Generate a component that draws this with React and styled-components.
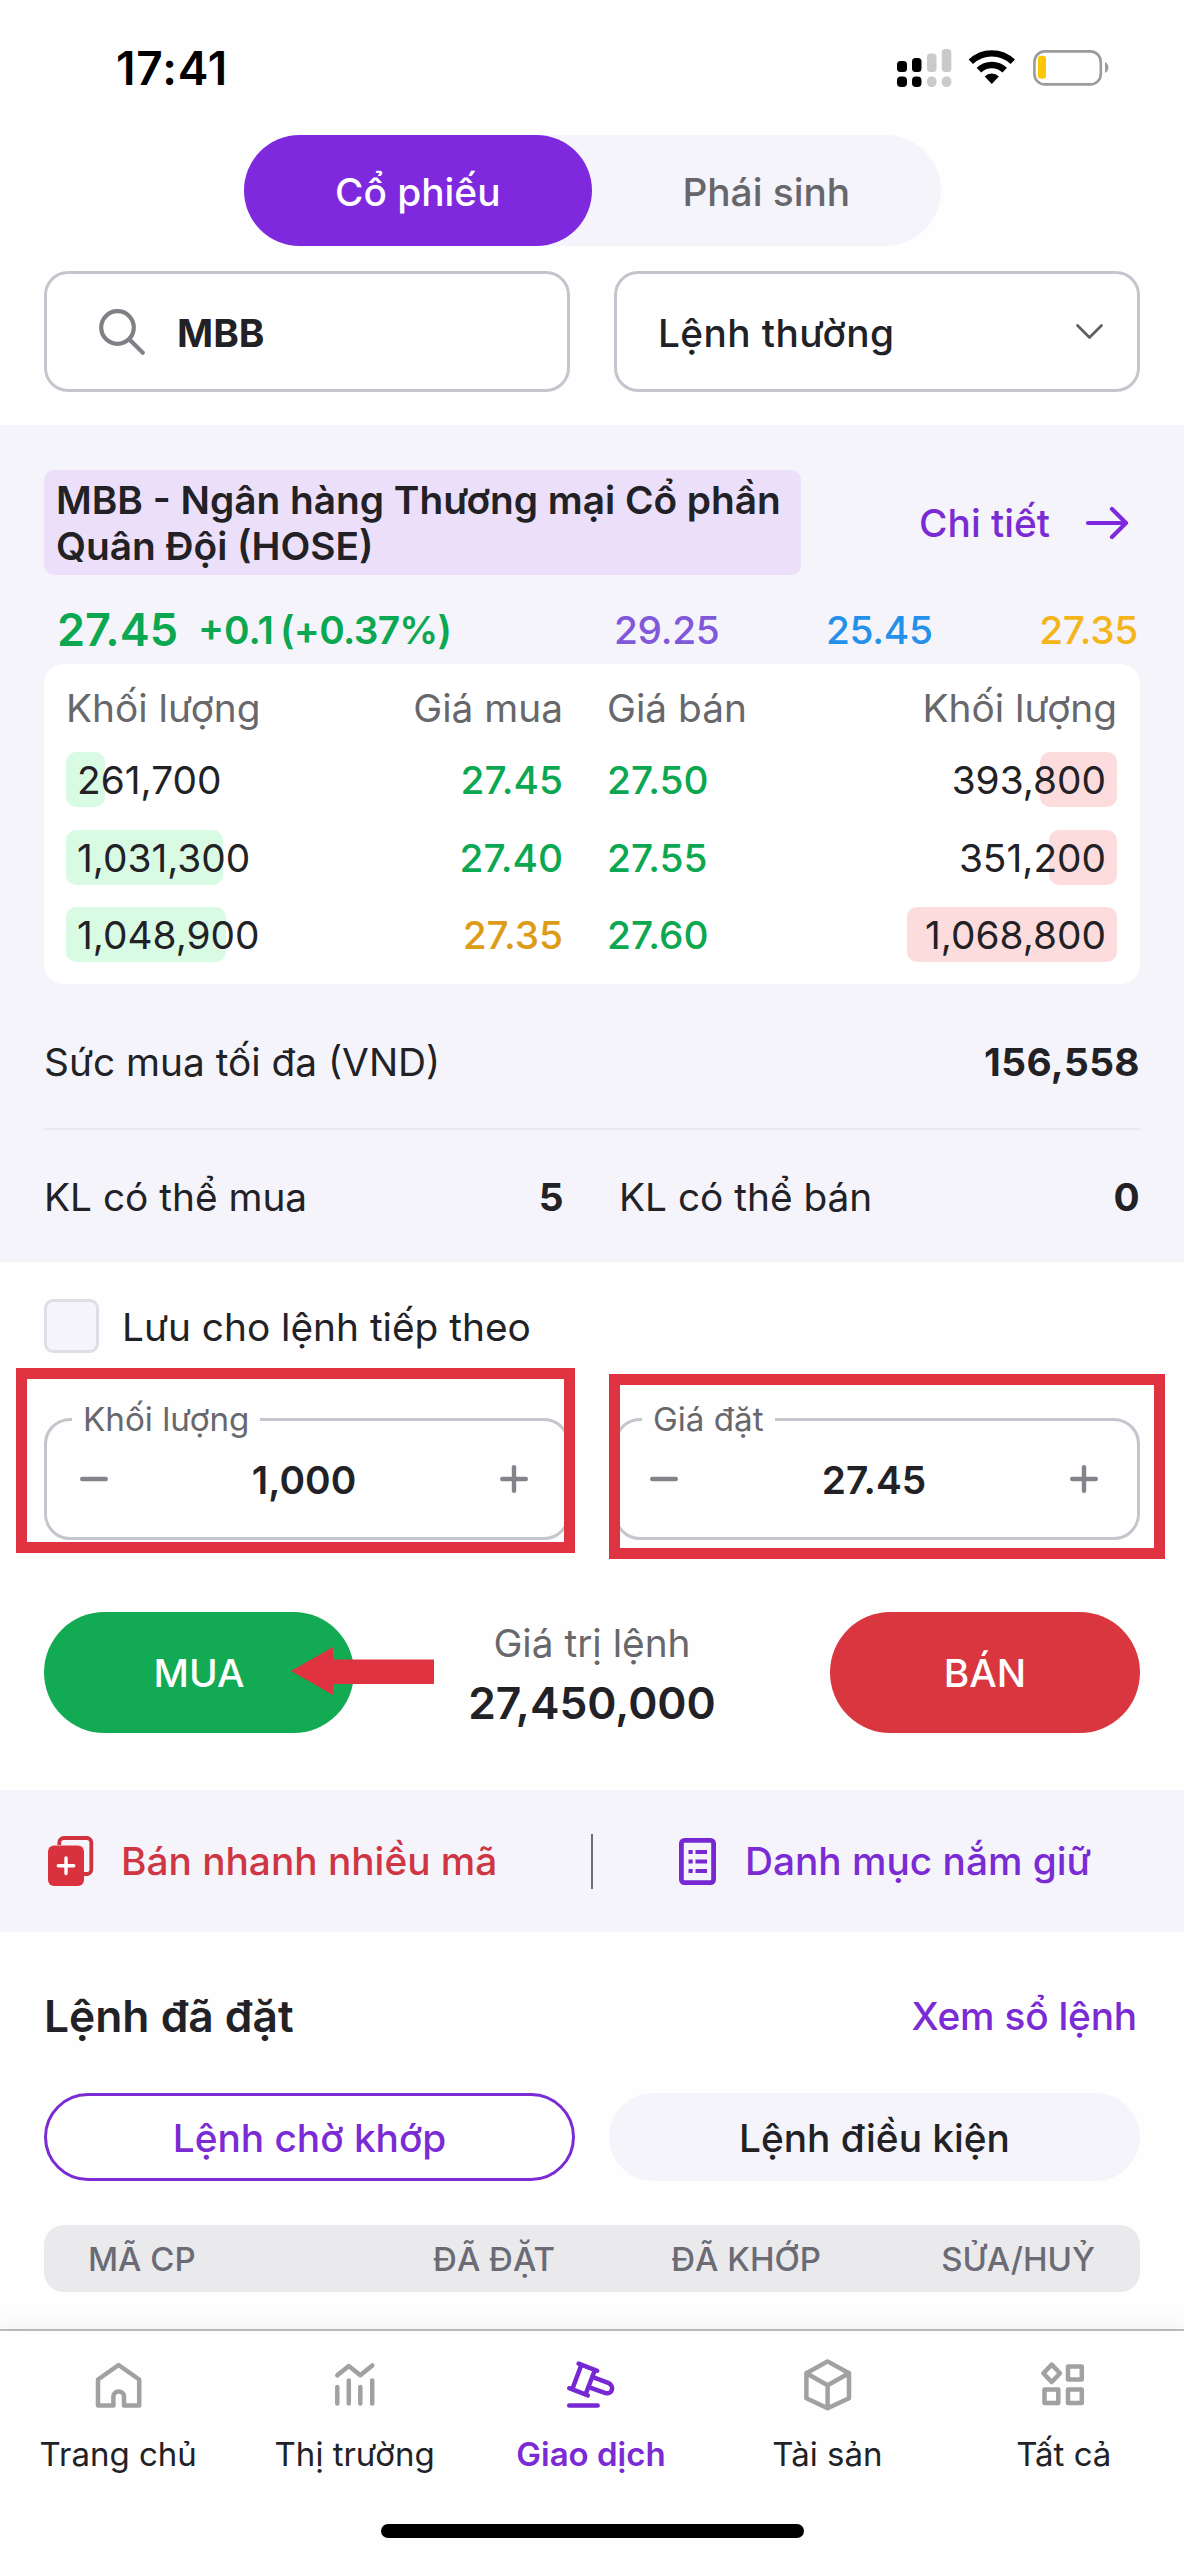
import React, { useState } from "react";
import styled, { createGlobalStyle } from "styled-components";

const GlobalStyle = createGlobalStyle`
  * {
    box-sizing: border-box;
  }
  body {
    margin: 0;
    background: #fefefe;
    font-family: Inter, "Noto Sans", sans-serif;
    font-size: 38.8px;
    color: #222226;
  }
  button {
    padding: 0;
    border: none;
    background: none;
    font: inherit;
    color: inherit;
  }
  svg {
    display: block;
    flex: none;
    overflow: visible;
  }
`;

const Screen = styled.div`
  width: 1184px;
  height: 2560px;
  overflow: hidden;
  display: flex;
  flex-direction: column;
  white-space: nowrap;
`;

/* ---------- status bar ---------- */

const StatusBar = styled.div`
  height: 135px;
  padding: 0 76px 0 116px;
  display: flex;
  justify-content: space-between;
  align-items: center;
`;

const Clock = styled.div`
  font-size: 46px;
  font-weight: 600;
  letter-spacing: 0.9px;
  color: #000;
`;

const StatusIcons = styled.div`
  display: flex;
  align-items: center;
  gap: 18px;
`;

/* ---------- header ---------- */

const Header = styled.div`
  height: 290px;
  padding: 0 44px;
`;

const Segment = styled.div`
  width: 697px;
  height: 111px;
  margin: 0 auto;
  display: flex;
  border-radius: 56px;
  background: #f5f4fb;
`;

const SegmentItem = styled.button`
  flex: 1;
  padding-top: 1px;
  border-radius: 56px;
  font-weight: 500;
  color: ${(props) => (props.$active ? "#fff" : "#66666b")};
  background: ${(props) => (props.$active ? "#7f29df" : "transparent")};
`;

const TwoColumns = styled.div`
  display: grid;
  grid-template-columns: 526px 526px;
  column-gap: 44px;
`;

const PickerRow = styled(TwoColumns)`
  margin-top: 25px;
`;

const PickerBox = styled.div`
  height: 121px;
  padding: 1px ${(props) => props.$right || 0}px 0 ${(props) => props.$left}px;
  display: flex;
  align-items: center;
  border: 3px solid #c5c5ce;
  border-radius: 24px;
  background: #fff;
`;

const Symbol = styled.div`
  margin-left: 32px;
  font-weight: 700;
`;

const OrderType = styled.div`
  flex: 1;
  font-weight: 500;
  letter-spacing: 0.4px;
`;

/* ---------- quote ---------- */

const QuoteSection = styled.section`
  height: 837px;
  padding: 45px 44px 0;
  background: #f5f4fb;
`;

const NameRow = styled.div`
  height: 105px;
  display: flex;
  justify-content: space-between;
  align-items: center;
`;

const CompanyName = styled.div`
  width: 757px;
  height: 105px;
  padding: 7px 12px 0;
  border-radius: 10px;
  background: #ecdffa;
  font-weight: 600;
  line-height: 46px;
  white-space: normal;
`;

const DetailLink = styled.a`
  padding-right: 12px;
  display: flex;
  align-items: center;
  gap: 36px;
  font-weight: 500;
  color: #7a2bd3;
`;

const PriceRow = styled.div`
  height: 60px;
  margin: 24px 0 5px;
  padding: 0 2px 0 13px;
  display: flex;
  align-items: center;
  color: #0ba751;
  font-weight: 600;
`;

const LastPrice = styled.div`
  width: 141px;
  font-size: 45px;
`;

const Change = styled.div`
  margin-right: ${(props) => props.$gap || 0}px;
  letter-spacing: ${(props) => props.$spacing || 0}px;
`;

const Limits = styled.div`
  width: 524px;
  margin-left: auto;
  display: flex;
  justify-content: space-between;
  letter-spacing: -0.3px;
`;

const Limit = styled.div`
  font-weight: 500;
  color: ${(props) => props.$color};
`;

const DepthCard = styled.div`
  height: 320px;
  padding: 10px 23px 0 22px;
  border-radius: 20px;
  background: #fff;
`;

const DepthRow = styled.div`
  height: ${(props) => (props.$head ? "67px" : "77.5px")};
  display: grid;
  grid-template-columns: 347px 150px 194px 360px;
  align-items: center;
  color: ${(props) => (props.$head ? "#67676c" : "inherit")};
`;

const HeadCell = styled.div`
  text-align: ${(props) => props.$align || "left"};
`;

const AskSpacer = styled.div`
  padding-left: 44px;
`;

const BidPrice = styled.div`
  text-align: right;
  font-weight: 500;
  color: ${(props) => props.$color || "#0ba751"};
`;

const AskPrice = styled(BidPrice)`
  text-align: left;
`;

const Volume = styled.div`
  position: relative;
  height: 55px;
  padding: 0 11px;
  line-height: 56px;
  text-align: ${(props) => (props.$ask ? "right" : "left")};
`;

const VolumeBar = styled.div`
  position: absolute;
  top: 0;
  ${(props) => (props.$ask ? "right" : "left")}: 0;
  height: 55px;
  border-radius: 10px;
  background: ${(props) => (props.$ask ? "#fddcdd" : "#d9fae3")};
`;

const VolumeText = styled.span`
  position: relative;
`;

const PowerRow = styled.div`
  height: 146px;
  padding-top: 11px;
  display: flex;
  justify-content: space-between;
  align-items: center;
  border-bottom: 2px solid #e9e8ee;
`;

const CapacityRow = styled.div`
  height: 132px;
  display: grid;
  grid-template-columns: 520px 521px;
  column-gap: 55px;
  align-items: center;
`;

const Capacity = styled.div`
  display: flex;
  justify-content: space-between;
`;

const Strong = styled.span`
  font-weight: 700;
  letter-spacing: 0.4px;
`;

/* ---------- order form ---------- */

const OrderSection = styled.section`
  height: 528px;
  padding: 37px 44px 0;
`;

const SaveRow = styled.label`
  height: 54px;
  display: flex;
  align-items: center;
  gap: 23px;
`;

const Checkbox = styled.span`
  width: 55px;
  height: 54px;
  border: 3px solid #dedee6;
  border-radius: 9px;
  background: #f5f4fb;
`;

const FieldRow = styled(TwoColumns)`
  margin-top: 65px;
`;

const Field = styled.div`
  position: relative;
  height: 122px;
  padding: 0 39px 0 33px;
  display: flex;
  justify-content: space-between;
  align-items: center;
  border: 3px solid #c5c5ce;
  border-radius: 26px;
`;

const FieldLabel = styled.div`
  position: absolute;
  top: -22px;
  left: 25px;
  padding: 0 11px;
  background: #fefefe;
  color: #67676c;
  font-size: 33.2px;
  line-height: 40px;
`;

const FieldValue = styled.div`
  font-weight: 600;
`;

const Highlight = styled.div`
  position: absolute;
  left: ${(props) => props.$left}px;
  top: ${(props) => props.$top}px;
  width: ${(props) => props.$width}px;
  height: 185px;
  border: 11px solid #e03341;
`;

const ActionRow = styled.div`
  height: 121px;
  margin-top: 72px;
  display: flex;
  justify-content: space-between;
  align-items: center;
`;

const ActionButton = styled.button`
  position: relative;
  width: 310px;
  height: 121px;
  border-radius: 61px;
  background: ${(props) => props.$color};
  color: #fff;
  font-weight: 500;
`;

const Pointer = styled.svg`
  position: absolute;
  left: 247px;
  top: 35px;
`;

const OrderValue = styled.div`
  text-align: center;
  line-height: 61px;
  color: #67676c;
`;

const OrderTotal = styled.div`
  font-size: 44.3px;
  font-weight: 600;
  color: #222226;
`;

/* ---------- shortcuts ---------- */

const Shortcuts = styled.div`
  height: 142px;
  display: grid;
  grid-template-columns: 591px 2px 591px;
  align-items: center;
  background: #f5f4fb;
  font-weight: 500;
`;

const Shortcut = styled.a`
  padding-left: ${(props) => props.$left}px;
  display: flex;
  align-items: center;
  gap: ${(props) => props.$gap}px;
  line-height: 46px;
  color: ${(props) => props.$color};
`;

const ShortcutDivider = styled.div`
  height: 55px;
  background: #6d6d72;
`;

/* ---------- order book ---------- */

const BookSection = styled.section`
  height: 397px;
  padding: 0 44px;
`;

const BookHeader = styled.div`
  height: 161px;
  padding-top: 6px;
  display: flex;
  justify-content: space-between;
  align-items: center;
`;

const BookTitle = styled.div`
  font-size: 44.3px;
  font-weight: 600;
`;

const BookLink = styled.a`
  padding-right: 3px;
  font-weight: 500;
  letter-spacing: -0.2px;
  line-height: 48px;
  color: #7a2bd3;
`;

const Tabs = styled.div`
  display: grid;
  grid-template-columns: 531px 531px;
  column-gap: 34px;
`;

const Tab = styled.button`
  height: 88px;
  border-radius: 44px;
  border: 3px solid ${(props) => (props.$active ? "#7a2bd3" : "#f5f4fb")};
  background: ${(props) => (props.$active ? "#fff" : "#f5f4fb")};
  color: ${(props) => (props.$active ? "#7a2bd3" : "#222226")};
  font-weight: 500;
`;

const TableHead = styled.div`
  height: 67px;
  margin-top: 44px;
  padding: 0 45px 0 44px;
  display: grid;
  grid-template-columns: 200px 267px 266px 1fr;
  align-items: center;
  border-radius: 20px;
  background: #eaeaed;
  color: #6b6b75;
  font-size: 33px;
  font-weight: 500;
  text-align: right;
`;

const FirstColumn = styled.div`
  text-align: left;
`;

/* ---------- bottom navigation ---------- */

const BottomNav = styled.nav`
  position: relative;
  height: 231px;
  border-top: 2px solid #b9b9bb;
  background: #fefefe;
  box-shadow: 0 -4px 24px rgba(0, 0, 0, 0.06);
`;

const NavItems = styled.div`
  padding: 22px 2px 0 0;
  display: grid;
  grid-template-columns: repeat(5, 1fr);
`;

const NavItem = styled.a`
  display: flex;
  flex-direction: column;
  align-items: center;
  gap: 17px;
  font-size: 33px;
  line-height: 40px;
  font-weight: ${(props) => (props.$active ? 600 : 400)};
  color: ${(props) => (props.$active ? "#7a2bd3" : "#222226")};
`;

const NavIcon = styled.svg`
  width: 64px;
  height: 64px;
  fill: none;
  stroke: ${(props) => (props.$active ? "#7728d2" : "#a1a1a1")};
  stroke-width: 4.5;
  stroke-linecap: round;
  stroke-linejoin: round;
`;

const HomeIndicator = styled.div`
  width: 423px;
  height: 14px;
  margin: 50px auto 0;
  border-radius: 7px;
  background: #000;
`;

const depth = [
  {
    bidVol: "261,700",
    bidBar: 39,
    bid: "27.45",
    ask: "27.50",
    askVol: "393,800",
    askBar: 77,
  },
  {
    bidVol: "1,031,300",
    bidBar: 157,
    bid: "27.40",
    ask: "27.55",
    askVol: "351,200",
    askBar: 68,
  },
  {
    bidVol: "1,048,900",
    bidBar: 160,
    bid: "27.35",
    bidColor: "#dc9c17",
    ask: "27.60",
    askVol: "1,068,800",
    askBar: 210,
  },
];

const navItems = [
  {
    label: "Trang chủ",
    icon: (
      <path d="M12 26.5 32.6 12l20.6 14.5v26H38v-8.8a5.3 5.3 0 0 0-10.6 0v8.800H12z" />
    ),
  },
  {
    label: "Thị trường",
    icon: (
      <path d="M14.3 34v16.5M25.8 27.5v23M37.3 34v16.5M49.2 27.5v23M14.3 22.3 25.8 13l11.5 9.3 12-9.8" />
    ),
  },
  {
    label: "Giao dịch",
    icon: (
      <>
        <path d="m19.6 10.6 18.6 7.2M10.2 35.2l18.6 7.2M22.3 12l-9 24.2M35.8 17.3l-9.2 24" />
        <path d="m33.2 23.9 16 6c6.600 3 4 12-2.6 10.200l-17-6" />
        <path d="M10.2 52.4h28.400" />
      </>
    ),
  },
  {
    label: "Tài sản",
    icon: (
      <path d="M32.6 8.4 54 20.2v25l-21.400 10-21.200-10v-25zM11.4 20.2l21.200 12 21.400-12M32.6 32.2v23" />
    ),
  },
  {
    label: "Tất cả",
    icon: (
      <>
        <path d="m19.7 11.6 8.3 8.7-8.3 8.7-8.3-8.7z" />
        <rect x="36" y="13.5" width="13.8" height="13" />
        <rect x="12.5" y="36.6" width="13.8" height="13.4" />
        <rect x="36" y="36.6" width="13.8" height="13.4" />
      </>
    ),
  },
];

const SignalIcon = () => (
  <svg width="54" height="38" viewBox="0 0 54 38">
    <rect x="0" y="12" width="10" height="11" rx="3.5" />
    <rect x="15" y="9" width="9.5" height="14" rx="3.5" />
    <rect x="0" y="27.5" width="10" height="10.5" rx="4" />
    <rect x="15" y="27.5" width="9.5" height="10.5" rx="4" />
    <g fill="#cacaca">
      <rect x="30" y="4.5" width="9.5" height="18.5" rx="3.5" />
      <rect x="44.8" y="0" width="9.5" height="23" rx="3.5" />
      <rect x="30" y="27.5" width="9.5" height="10.5" rx="4.5" />
      <rect x="44.8" y="27.5" width="9.5" height="10.5" rx="4.5" />
    </g>
  </svg>
);

const WifiIcon = () => (
  <svg width="46" height="35" viewBox="0 0 46 35" fill="none" stroke="#000">
    <path d="M1.8 11.8a30.200 30.200 0 0 1 42 0" strokeWidth="6.2" />
    <path d="M9.9 20.200a18.500 18.500 0 0 1 25.800 0" strokeWidth="6.5" />
    <path
      d="M22.800 34 15.700 26.400a10.200 10.200 0 0 1 14.200 0z"
      fill="#000"
      stroke="none"
    />
  </svg>
);

const BatteryIcon = () => (
  <svg width="75" height="36" viewBox="0 0 75 36">
    <rect
      x="1.4"
      y="1.4"
      width="66.4"
      height="33"
      rx="10.5"
      fill="none"
      stroke="#9b9b9b"
      strokeWidth="2.6"
    />
    <rect x="5" y="5.8" width="8" height="23" rx="3.2" fill="#fdc700" />
    <path d="M72 12c4.500 2 4.500 9 0 11z" fill="#9b9b9b" />
  </svg>
);

const SearchIcon = () => (
  <svg
    width="46"
    height="46"
    viewBox="0 0 46 46"
    fill="none"
    stroke="#7f7f86"
    strokeWidth="4.2"
    strokeLinecap="round"
  >
    <circle cx="18.5" cy="18.5" r="16.3" />
    <path d="m30.5 30.5 13.3 13.3" />
  </svg>
);

const ChevronIcon = () => (
  <svg
    width="27"
    height="16"
    viewBox="0 0 27 16"
    fill="none"
    stroke="#5f5f66"
    strokeWidth="2.8"
    strokeLinecap="round"
    strokeLinejoin="round"
  >
    <path d="m1.5 1.500 12 12 12-12" />
  </svg>
);

const ArrowIcon = () => (
  <svg
    width="42"
    height="32"
    viewBox="0 0 42 32"
    fill="none"
    stroke="#7f29df"
    strokeWidth="4.2"
    strokeLinecap="round"
    strokeLinejoin="round"
  >
    <path d="M2 16h38M26 2l14 14-14 14" />
  </svg>
);

const StepIcon = ({ plus }) => (
  <svg
    width="28"
    height="28"
    viewBox="0 0 28 28"
    stroke="#83838c"
    strokeWidth="4.4"
    strokeLinecap="round"
  >
    <path d="M2.2 14h23.6" />
    {plus && <path d="M14 2.2v23.6" />}
  </svg>
);

const MultiSellIcon = () => (
  <svg width="45" height="50" viewBox="0 0 45 50">
    <path
      d="M11.3 9V6.500a4.500 4.500 0 0 1 4.500-4.500h23a4.500 4.500 0 0 1 4.500 4.500v27a4.500 4.500 0 0 1-4.500 4.500H36"
      fill="none"
      stroke="#d0323f"
      strokeWidth="3.8"
    />
    <rect y="9.4" width="36" height="40.6" rx="6" fill="#d9323e" />
    <path
      d="M18 22v15.500M10.300 29.700h15.400"
      stroke="#fff"
      strokeWidth="3.4"
      strokeLinecap="round"
    />
  </svg>
);

const PortfolioIcon = () => (
  <svg width="37" height="47" viewBox="0 0 37 47" fill="none" stroke="#7728d2">
    <rect x="2.4" y="2.4" width="32.2" height="42.2" rx="3" strokeWidth="4.8" />
    <path
      d="M9.500 14h4.200M16.500 14h11.500M9.500 23.500h4.200M16.500 23.500h11.500M9.500 33h4.200M16.500 33h11.500"
      strokeWidth="4"
    />
  </svg>
);

const NumberField = ({ label, value, children }) => (
  <Field>
    <FieldLabel>{label}</FieldLabel>
    <button>
      <StepIcon />
    </button>
    <FieldValue>{value}</FieldValue>
    <button>
      <StepIcon plus />
    </button>
    {children}
  </Field>
);

const App = () => {
  const [market, setMarket] = useState("stock");
  const [tab, setTab] = useState("pending");

  return (
    <Screen>
      <GlobalStyle />
      <StatusBar>
        <Clock>17:41</Clock>
        <StatusIcons>
          <SignalIcon />
          <WifiIcon />
          <BatteryIcon />
        </StatusIcons>
      </StatusBar>

      <Header>
        <Segment>
          <SegmentItem
            $active={market === "stock"}
            onClick={() => setMarket("stock")}
          >
            Cổ phiếu
          </SegmentItem>
          <SegmentItem
            $active={market === "future"}
            onClick={() => setMarket("future")}
          >
            Phái sinh
          </SegmentItem>
        </Segment>
        <PickerRow>
          <PickerBox $left={52}>
            <SearchIcon />
            <Symbol>MBB</Symbol>
          </PickerBox>
          <PickerBox $left={41} $right={34}>
            <OrderType>Lệnh thường</OrderType>
            <ChevronIcon />
          </PickerBox>
        </PickerRow>
      </Header>

      <QuoteSection>
        <NameRow>
          <CompanyName>
            MBB - Ngân hàng Thương mại Cổ phần Quân Đội (HOSE)
          </CompanyName>
          <DetailLink>
            Chi tiết
            <ArrowIcon />
          </DetailLink>
        </NameRow>
        <PriceRow>
          <LastPrice>27.45</LastPrice>
          <Change $gap={6}>+0.1</Change>
          <Change $spacing={-0.7}>(+0.37%)</Change>
          <Limits>
            <Limit $color="#8059da">29.25</Limit>
            <Limit $color="#2391ea">25.45</Limit>
            <Limit $color="#f4b51c">27.35</Limit>
          </Limits>
        </PriceRow>
        <DepthCard>
          <DepthRow $head>
            <HeadCell>Khối lượng</HeadCell>
            <HeadCell $align="right">Giá mua</HeadCell>
            <AskSpacer>Giá bán</AskSpacer>
            <HeadCell $align="right">Khối lượng</HeadCell>
          </DepthRow>
          {depth.map((row) => (
            <DepthRow key={row.bid}>
              <Volume>
                <VolumeBar style={{ width: row.bidBar }} />
                <VolumeText>{row.bidVol}</VolumeText>
              </Volume>
              <BidPrice $color={row.bidColor}>{row.bid}</BidPrice>
              <AskSpacer>
                <AskPrice>{row.ask}</AskPrice>
              </AskSpacer>
              <Volume $ask>
                <VolumeBar $ask style={{ width: row.askBar }} />
                <VolumeText>{row.askVol}</VolumeText>
              </Volume>
            </DepthRow>
          ))}
        </DepthCard>
        <PowerRow>
          <span>Sức mua tối đa (VND)</span>
          <Strong>156,558</Strong>
        </PowerRow>
        <CapacityRow>
          <Capacity>
            <span>KL có thể mua</span>
            <Strong>5</Strong>
          </Capacity>
          <Capacity>
            <span>KL có thể bán</span>
            <Strong>0</Strong>
          </Capacity>
        </CapacityRow>
      </QuoteSection>

      <OrderSection>
        <SaveRow>
          <Checkbox />
          Lưu cho lệnh tiếp theo
        </SaveRow>
        <FieldRow>
          <NumberField label="Khối lượng" value="1,000">
            <Highlight $left={-31} $top={-53} $width={559} />
          </NumberField>
          <NumberField label="Giá đặt" value="27.45">
            <Highlight $left={-8} $top={-47} $width={556} />
          </NumberField>
        </FieldRow>
        <ActionRow>
          <ActionButton $color="#13aa54">
            MUA
            <Pointer width="143" height="48" viewBox="0 0 143 48" fill="#e03341">
              <path d="M0 24 42 0v12.500h101V37H42v11z" />
            </Pointer>
          </ActionButton>
          <OrderValue>
            Giá trị lệnh
            <OrderTotal>27,450,000</OrderTotal>
          </OrderValue>
          <ActionButton $color="#d9363f">BÁN</ActionButton>
        </ActionRow>
      </OrderSection>

      <Shortcuts>
        <Shortcut $left={48} $gap={28} $color="#cf3643">
          <MultiSellIcon />
          Bán nhanh nhiều mã
        </Shortcut>
        <ShortcutDivider />
        <Shortcut $left={86} $gap={29} $color="#7a2bd3">
          <PortfolioIcon />
          Danh mục nắm giữ
        </Shortcut>
      </Shortcuts>

      <BookSection>
        <BookHeader>
          <BookTitle>Lệnh đã đặt</BookTitle>
          <BookLink>Xem sổ lệnh</BookLink>
        </BookHeader>
        <Tabs>
          <Tab $active={tab === "pending"} onClick={() => setTab("pending")}>
            Lệnh chờ khớp
          </Tab>
          <Tab $active={tab === "condition"} onClick={() => setTab("condition")}>
            Lệnh điều kiện
          </Tab>
        </Tabs>
        <TableHead>
          <FirstColumn>MÃ CP</FirstColumn>
          <div>ĐÃ ĐẶT</div>
          <div>ĐÃ KHỚP</div>
          <div>SỬA/HUỶ</div>
        </TableHead>
      </BookSection>

      <BottomNav>
        <NavItems>
          {navItems.map((item) => {
            const active = item.label === "Giao dịch";
            return (
              <NavItem key={item.label} $active={active}>
                <NavIcon $active={active} viewBox="0 0 64 64">
                  {item.icon}
                </NavIcon>
                {item.label}
              </NavItem>
            );
          })}
        </NavItems>
        <HomeIndicator />
      </BottomNav>
    </Screen>
  );
};

export default App;
